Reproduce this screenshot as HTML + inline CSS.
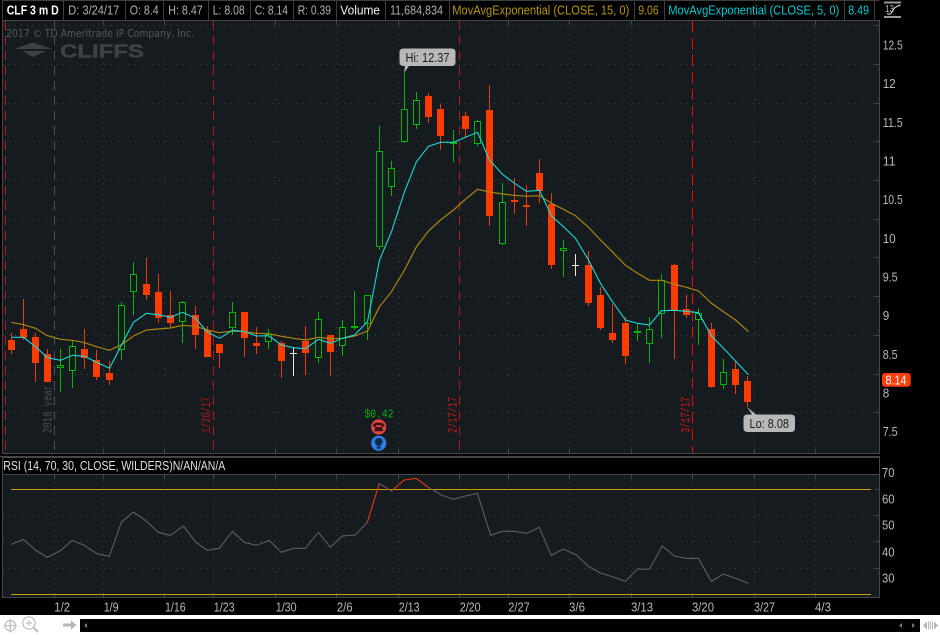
<!DOCTYPE html>
<html><head><meta charset="utf-8"><title>CLF 3 m D</title>
<style>
html,body{margin:0;padding:0;background:#000;width:940px;height:635px;overflow:hidden}
svg{display:block;font-family:"Liberation Sans",sans-serif}
.g{fill:#b0b0b0;font-size:12.5px}
.a{fill:#b8b8b8;font-size:12.6px}
</style></head><body>
<svg width="940" height="635" viewBox="0 0 940 635" xmlns="http://www.w3.org/2000/svg">
<rect width="940" height="635" fill="#000"/>
<rect x="2.5" y="20.5" width="877" height="433" fill="#161b20"/>
<rect x="2.5" y="474.5" width="877" height="123" fill="#161b20"/>

<!-- header separators -->
<path d="M2.5 .5H879.5M2.5 .5V20M63.5 1V20M125.5 1V20M163.5 1V20M208.5 1V20M250.5 1V20M293.5 1V20M336.5 1V20M385.5 1V20M449.5 1V20M634.5 1V20M664.5 1V20M844.5 1V20M874.5 1V20" stroke="#3c3f42" fill="none"/>
<!-- frames -->
<path d="M2.5 20.5H879.5V453.5H2.5ZM0 456.5H880M2.5 457.5H879.5V597.5H2.5ZM2.5 474.5H879.5" stroke="#44474a" fill="none"/>

<!-- grid main -->
<g stroke="#3d4145" stroke-dasharray="1 5" fill="none">
<path d="M3 25.5H879M3 64.5H879M3 103.5H879M3 141.5H879M3 180.5H879M3 219.5H879M3 257.5H879M3 296.5H879M3 335.5H879M3 374.5H879M3 412.5H879"/>
<path d="M103.5 21V453M164.5 21V453M275.5 21V453M336.5 21V453M398.5 21V453M508.5 21V453M569.5 21V453M631.5 21V453M754.5 21V453M815.5 21V453"/>
<path d="M3 515.5H879M3 541.5H879M3 568.5H879"/>
<path d="M54.5 475V597M103.5 475V597M164.5 475V597M213.5 475V597M275.5 475V597M336.5 475V597M398.5 475V597M459.5 475V597M508.5 475V597M569.5 475V597M631.5 475V597M692.5 475V597M754.5 475V597M815.5 475V597"/>
</g>
<!-- ticks -->
<path d="M54.5 21V25M103.5 21V25M164.5 21V25M213.5 21V25M275.5 21V25M336.5 21V25M398.5 21V25M459.5 21V25M508.5 21V25M569.5 21V25M631.5 21V25M692.5 21V25M754.5 21V25M815.5 21V25M103.5 449V453M164.5 449V453M275.5 449V453M336.5 449V453M398.5 449V453M508.5 449V453M569.5 449V453M631.5 449V453M754.5 449V453M815.5 449V453M54.5 475V479M103.5 475V479M164.5 475V479M213.5 475V479M275.5 475V479M336.5 475V479M398.5 475V479M459.5 475V479M508.5 475V479M569.5 475V479M631.5 475V479M692.5 475V479M754.5 475V479M815.5 475V479M54.5 593V597M103.5 593V597M164.5 593V597M213.5 593V597M275.5 593V597M336.5 593V597M398.5 593V597M459.5 593V597M508.5 593V597M569.5 593V597M631.5 593V597M692.5 593V597M754.5 593V597M815.5 593V597M875 25.5H879M875 64.5H879M875 103.5H879M875 141.5H879M875 180.5H879M875 219.5H879M875 257.5H879M875 296.5H879M875 335.5H879M875 374.5H879M875 412.5H879M875 489.5H879M875 515.5H879M875 541.5H879M875 568.5H879" stroke="#44474a" fill="none"/>

<!-- vertical markers -->
<path d="M54.5 21V453" stroke="#4c5054" stroke-dasharray="9 6" fill="none"/>
<path d="M5.5 21V453M213.5 21V453M459.5 21V453" stroke="#b41818" stroke-dasharray="9 6" fill="none"/>
<path d="M692.5 21V453" stroke="#f00808" stroke-dasharray="11 6" fill="none"/>

<!-- watermark -->
<text x="6" y="37" style="font-family:'DejaVu Sans',sans-serif;font-size:10.5px" fill="#53575c" textLength="188" lengthAdjust="spacingAndGlyphs">2017 © TD Ameritrade IP Company, Inc.</text>
<path d="M14 49L33 42.5L52 49ZM22 51H46L33 57Z" fill="#3c4045"/>
<text x="60" y="57.7" font-size="18" font-weight="bold" fill="#3e4247" stroke="#3e4247" stroke-width=".4" textLength="84" lengthAdjust="spacingAndGlyphs">CLIFFS</text>

<!-- rotated labels -->
<g style="font-family:'Liberation Mono',monospace;font-size:13px">
<text transform="translate(51.5,433) rotate(-90)" fill="#4a4e52" textLength="48" lengthAdjust="spacingAndGlyphs">2016 year</text>
<text transform="translate(210,433) rotate(-90)" fill="#b41818" textLength="36" lengthAdjust="spacingAndGlyphs">1/20/17</text>
<text transform="translate(456.5,433) rotate(-90)" fill="#c41818" textLength="36" lengthAdjust="spacingAndGlyphs">2/17/17</text>
<text transform="translate(689.5,433) rotate(-90)" fill="#d41414" textLength="36" lengthAdjust="spacingAndGlyphs">3/17/17</text>
</g>

<!-- wicks -->
<path fill="none" stroke="#ee3a0a" d="M11.5 333V354M23.5 299V340M35.5 333V382M47.5 349V382M84.5 329V369M96.5 350V380M109.5 361V385M146.5 258V300M158.5 274V323M170.5 291V328M195.5 306V349M207.5 326V357M219.5 344V368M244.5 312V357M256.5 327V354M281.5 341V378M305.5 326V375M330.5 335V376M428.5 93V123M440.5 104V150M465.5 112V138M489.5 85V226M514.5 178V214M526.5 185V226M539.5 159V203M551.5 193V269M588.5 251V306M600.5 287V330M612.5 304V343M625.5 317V364M674.5 264V359M686.5 295V318M711.5 323V388M735.5 361V394M747.5 376V407"/>
<path fill="none" stroke="#00b400" d="M60.5 349V392M72.5 341V388M121.5 302V360M133.5 262V315M182.5 301V343M232.5 302V335M268.5 329V349M318.5 312V363M342.5 320V356M354.5 291V330M367.5 295V340M379.5 126V250M391.5 161V196M404.5 73V143M416.5 92V129M453.5 130V162M477.5 120V146M502.5 183V245M563.5 240V277M637.5 323V341M649.5 317V363M661.5 274V338M698.5 308V345M723.5 359V389"/>
<path fill="none" stroke="#e6e6e6" d="M293.5 348V376M290 353.5H297M575.5 254V276M572 265.5H579"/>
<!-- red bodies -->
<g fill="#ff3c00">
<rect x="8" y="340" width="7" height="10"/><rect x="20" y="329" width="7" height="9"/><rect x="32" y="337" width="7" height="26"/><rect x="44" y="354" width="7" height="28"/><rect x="81" y="349" width="7" height="9"/><rect x="93" y="360" width="7" height="17"/><rect x="106" y="373" width="7" height="7"/><rect x="143" y="284" width="7" height="11"/><rect x="155" y="292" width="7" height="26"/><rect x="167" y="315" width="7" height="8"/><rect x="192" y="315" width="7" height="20"/><rect x="204" y="330" width="7" height="27"/><rect x="216" y="344" width="7" height="9"/><rect x="241" y="312" width="7" height="26"/><rect x="253" y="343" width="7" height="3"/><rect x="278" y="343" width="7" height="18"/><rect x="302" y="341" width="7" height="12"/><rect x="327" y="335" width="7" height="17"/><rect x="425" y="96" width="7" height="21"/><rect x="437" y="109" width="7" height="27"/><rect x="462" y="116" width="7" height="13"/><rect x="486" y="110" width="7" height="106"/><rect x="511" y="200" width="7" height="2"/><rect x="523" y="205" width="7" height="2"/><rect x="536" y="173" width="7" height="18"/><rect x="548" y="204" width="7" height="61"/><rect x="585" y="265" width="7" height="38"/><rect x="597" y="295" width="7" height="33"/><rect x="609" y="333" width="7" height="7"/><rect x="622" y="323" width="7" height="33"/><rect x="671" y="265" width="7" height="45"/><rect x="683" y="309" width="7" height="6"/><rect x="708" y="329" width="7" height="58"/><rect x="732" y="369" width="7" height="16"/><rect x="744" y="381" width="7" height="21"/>
</g>
<!-- green bodies -->
<g fill="#161b20" stroke="#00b400">
<rect x="57.5" y="365.5" width="6" height="2"/><rect x="69.5" y="346.5" width="6" height="24"/><rect x="118.5" y="305.5" width="6" height="44"/><rect x="130.5" y="274.5" width="6" height="17"/><rect x="179.5" y="302.5" width="6" height="19"/><rect x="229.5" y="312.5" width="6" height="15"/><rect x="265.5" y="334.5" width="6" height="7"/><rect x="315.5" y="319.5" width="6" height="38"/><rect x="339.5" y="327.5" width="6" height="18"/><rect x="351.5" y="326.5" width="6" height="1"/><rect x="364.5" y="295.5" width="6" height="28"/><rect x="376.5" y="151.5" width="6" height="95"/><rect x="388.5" y="168.5" width="6" height="18"/><rect x="401.5" y="109.5" width="6" height="32"/><rect x="413.5" y="100.5" width="6" height="24"/><rect x="450.5" y="142.5" width="6" height="1"/><rect x="474.5" y="121.5" width="6" height="22"/><rect x="499.5" y="202.5" width="6" height="41"/><rect x="560.5" y="248.5" width="6" height="2"/><rect x="634.5" y="331.5" width="6" height="1"/><rect x="646.5" y="329.5" width="6" height="14"/><rect x="658.5" y="280.5" width="6" height="33"/><rect x="695.5" y="313.5" width="6" height="6"/><rect x="720.5" y="372.5" width="6" height="12"/>
</g>

<!-- EMA 15 -->
<polyline fill="none" stroke="#a8860c" stroke-width="1.2" points="11.5,322.3 23.5,324.7 35.5,328.3 47.5,335.7 60.5,339.3 72.5,340.3 84.5,342.7 96.5,346.7 109.5,350.3 121.5,344.7 133.5,336 146.5,330 158.5,329 170.5,328 182.5,325.3 195.5,326.3 207.5,330 219.5,332.7 232.5,331 244.5,331.7 256.5,333.3 268.5,333.7 281.5,336.3 293.5,338.3 305.5,340 318.5,337.3 330.5,338.7 342.5,338.3 354.5,336 367.5,331 379.5,306.7 391.5,291.7 404.5,270 416.5,246.7 428.5,231 440.5,220 453.5,210 465.5,199.3 477.5,189.3 489.5,192 502.5,194 514.5,195.3 526.5,196.3 539.5,195.7 551.5,203.3 563.5,209.3 575.5,215.7 588.5,227.3 600.5,240 612.5,252 625.5,265.3 637.5,273.3 649.5,280.3 661.5,280.3 674.5,284.3 686.5,287.3 698.5,291 711.5,303.3 723.5,311.7 735.5,320 748.5,331.7"/>
<!-- EMA 5 -->
<polyline fill="none" stroke="#1fd6d6" stroke-width="1.1" points="11.5,337.3 23.5,337.3 35.5,346.7 47.5,357.7 60.5,360.3 72.5,355.3 84.5,356.3 96.5,362.3 109.5,368.3 121.5,345 133.5,322.3 146.5,313.3 158.5,314.7 170.5,317.3 182.5,312.3 195.5,318.3 207.5,332 219.5,338.3 232.5,330.3 244.5,331.5 256.5,336 268.5,335.7 281.5,345 293.5,347.7 305.5,348.7 318.5,339.3 330.5,343.3 342.5,338.3 354.5,335 367.5,321.7 379.5,260 391.5,231.7 404.5,191.7 416.5,161.7 428.5,146.3 440.5,142.3 453.5,142.3 465.5,137.3 477.5,132.3 489.5,160 502.5,174.3 514.5,183.3 526.5,191.3 539.5,190.3 551.5,216 563.5,226.7 575.5,238.3 588.5,260 600.5,283.3 612.5,301.7 625.5,320 637.5,323.3 649.5,325 661.5,310.7 674.5,310.3 686.5,311.3 698.5,312.7 711.5,336 723.5,348.3 735.5,361 748.5,374.7"/>

<!-- Balloons -->
<path d="M403.5 48.5H451.5Q455.5 48.5 455.5 52.5V62Q455.5 66 451.5 66H409L404 73L405 66H403.5Q399.5 66 399.5 62V52.5Q399.5 48.5 403.5 48.5Z" fill="#b8b8b8"/>
<text x="405.5" y="62" font-size="12.5" fill="#1c1c1c" textLength="44" lengthAdjust="spacingAndGlyphs">Hi: 12.37</text>
<path d="M747.5 414.5H752L747 407L756 414.5H791Q795 414.5 795 418.5V428Q795 432 791 432H747.5Q743.5 432 743.5 428V418.5Q743.5 414.5 747.5 414.5Z" fill="#b8b8b8"/>
<text x="749.5" y="428" font-size="12.5" fill="#1c1c1c" textLength="39.5" lengthAdjust="spacingAndGlyphs">Lo: 8.08</text>

<!-- dividend + icons -->
<text x="364.5" y="417.5" style="font-family:'Liberation Mono',monospace;font-size:12px" fill="#00b400" textLength="29" lengthAdjust="spacingAndGlyphs">$0.42</text>
<circle cx="378.7" cy="427" r="7.6" fill="#e24444"/>
<path d="M373 425.5Q373 422.6 378.7 422.6Q384.4 422.6 384.4 425.5V426.8H381.7L381.2 425.2H376.2L375.7 426.8H373ZM375.3 427H382.1L383.2 431.3H374.2Z" fill="#3a1414"/>
<circle cx="378.7" cy="443.3" r="7.6" fill="#2c7fe6"/>
<path d="M378.7 438A3.6 3.6 0 0 1 380.7 444.7V446H376.7V444.7A3.6 3.6 0 0 1 378.7 438ZM376.7 446.8H380.7V448.6H376.7Z" fill="#0e2a4e"/>

<!-- Header text -->
<text x="6.7" y="14.5" font-size="12.5" font-weight="bold" fill="#fff" textLength="52" lengthAdjust="spacingAndGlyphs">CLF 3 m D</text>
<text class="g" x="68.3" y="14.5" textLength="51" lengthAdjust="spacingAndGlyphs">D: 3/24/17</text>
<text class="g" x="129.7" y="14.5" textLength="29" lengthAdjust="spacingAndGlyphs">O: 8.4</text>
<text class="g" x="168.3" y="14.5" textLength="34.4" lengthAdjust="spacingAndGlyphs">H: 8.47</text>
<text class="g" x="212.7" y="14.5" textLength="32" lengthAdjust="spacingAndGlyphs">L: 8.08</text>
<text class="g" x="254.7" y="14.5" textLength="33.3" lengthAdjust="spacingAndGlyphs">C: 8.14</text>
<text class="g" x="297.7" y="14.5" textLength="33.3" lengthAdjust="spacingAndGlyphs">R: 0.39</text>
<text x="340.3" y="14.5" font-size="12.5" fill="#f0f0f0" textLength="39.7" lengthAdjust="spacingAndGlyphs">Volume</text>
<text class="g" x="390" y="14.5" textLength="53" lengthAdjust="spacingAndGlyphs">11,684,834</text>
<text x="452.3" y="14.5" font-size="12.5" fill="#b8950a" textLength="177" lengthAdjust="spacingAndGlyphs">MovAvgExponential (CLOSE, 15, 0)</text>
<text x="638.3" y="14.5" font-size="12.5" fill="#b8950a" textLength="20.4" lengthAdjust="spacingAndGlyphs">9.06</text>
<text x="668.3" y="14.5" font-size="12.5" fill="#00c8ce" textLength="171" lengthAdjust="spacingAndGlyphs">MovAvgExponential (CLOSE, 5, 0)</text>
<text x="848.3" y="14.5" font-size="12.5" fill="#00c8ce" textLength="20.7" lengthAdjust="spacingAndGlyphs">8.49</text>
<!-- top-right icon -->
<path d="M884 2.5H901M884 17H901" stroke="#9a9a9a" stroke-width="2" fill="none"/>
<text x="885" y="12" font-size="10.5" fill="#bbb" textLength="9" lengthAdjust="spacingAndGlyphs">13</text>
<path d="M887 13.5Q890.5 15.5 892.5 11Q894.5 6.5 900.5 5" stroke="#c4c4c4" stroke-width="1.2" fill="none"/>

<!-- Right axis -->
<text class="a" x="882.7" y="49.4" textLength="20" lengthAdjust="spacingAndGlyphs">12.5</text>
<text class="a" x="882.7" y="88" textLength="13" lengthAdjust="spacingAndGlyphs">12</text>
<text class="a" x="882.7" y="127" textLength="20" lengthAdjust="spacingAndGlyphs">11.5</text>
<text class="a" x="882.7" y="165.5" textLength="13" lengthAdjust="spacingAndGlyphs">11</text>
<text class="a" x="882.7" y="204" textLength="20" lengthAdjust="spacingAndGlyphs">10.5</text>
<text class="a" x="882.7" y="243" textLength="13" lengthAdjust="spacingAndGlyphs">10</text>
<text class="a" x="882.7" y="281.5" textLength="15" lengthAdjust="spacingAndGlyphs">9.5</text>
<text class="a" x="882.7" y="320" textLength="6.5" lengthAdjust="spacingAndGlyphs">9</text>
<text class="a" x="882.7" y="359" textLength="15" lengthAdjust="spacingAndGlyphs">8.5</text>
<text class="a" x="882.7" y="397.5" textLength="6.5" lengthAdjust="spacingAndGlyphs">8</text>
<text class="a" x="882.7" y="436" textLength="15" lengthAdjust="spacingAndGlyphs">7.5</text>
<rect x="882" y="373" width="28.7" height="13.7" rx="3" fill="#ff3c0a"/>
<text x="885.5" y="384.3" font-size="12.5" fill="#fff" textLength="21" lengthAdjust="spacingAndGlyphs">8.14</text>

<!-- RSI -->
<text x="3.3" y="470" font-size="12.5" fill="#e0e0e0" textLength="222" lengthAdjust="spacingAndGlyphs">RSI (14, 70, 30, CLOSE, WILDERS)N/AN/AN/A</text>
<path d="M11 489.5H871M11 594.5H871" stroke="#d09f00" fill="none"/>
<g transform="translate(0,455) scale(.33333)" fill="none" stroke-width="3.3">
<polyline stroke="#5c5f62" points="34,268 70,253 106,285 142,307 181,287 217,256 253,271 292,297 328,304 364,202 400,171 439,198 475,232 511,241 550,213 586,260 622,286 658,280 697,229 733,262 769,271 808,256 844,292 880,280 916,280 955,232 991,277 1027,243 1066,240 1102,202"/>
<polyline stroke="#e63a0a" points="1102,202 1138,85"/>
<polyline stroke="#5c5f62" points="1138,85 1174,108"/>
<polyline stroke="#e63a0a" points="1174,108 1213,75 1249,70 1285,97"/>
<polyline stroke="#5c5f62" points="1285,97 1324,120 1360,133 1396,123 1432,115 1472,241 1507,229 1543,229 1579,235 1618,217 1654,301 1690,282 1729,300 1765,334 1801,354 1840,366 1876,379 1912,342 1948,343 1987,273 2023,303 2059,310 2095,310 2134,379 2170,357 2209,371 2245,385"/>
</g>
<text class="a" x="882" y="477" textLength="12.5" lengthAdjust="spacingAndGlyphs">70</text>
<text class="a" x="882" y="503.3" textLength="12.5" lengthAdjust="spacingAndGlyphs">60</text>
<text class="a" x="882" y="529.7" textLength="12.5" lengthAdjust="spacingAndGlyphs">50</text>
<text class="a" x="882" y="556.3" textLength="12.5" lengthAdjust="spacingAndGlyphs">40</text>
<text class="a" x="882" y="582.3" textLength="12.5" lengthAdjust="spacingAndGlyphs">30</text>

<!-- X axis -->
<text class="a" x="54.3" y="611.5" textLength="15.7" lengthAdjust="spacingAndGlyphs">1/2</text>
<text class="a" x="103.7" y="611.5" textLength="15" lengthAdjust="spacingAndGlyphs">1/9</text>
<text class="a" x="165" y="611.5" textLength="20.7" lengthAdjust="spacingAndGlyphs">1/16</text>
<text class="a" x="213.7" y="611.5" textLength="21" lengthAdjust="spacingAndGlyphs">1/23</text>
<text class="a" x="275.7" y="611.5" textLength="21" lengthAdjust="spacingAndGlyphs">1/30</text>
<text class="a" x="336.7" y="611.5" textLength="16" lengthAdjust="spacingAndGlyphs">2/6</text>
<text class="a" x="398.7" y="611.5" textLength="21" lengthAdjust="spacingAndGlyphs">2/13</text>
<text class="a" x="459.7" y="611.5" textLength="21" lengthAdjust="spacingAndGlyphs">2/20</text>
<text class="a" x="508.3" y="611.5" textLength="21.4" lengthAdjust="spacingAndGlyphs">2/27</text>
<text class="a" x="569" y="611.5" textLength="16" lengthAdjust="spacingAndGlyphs">3/6</text>
<text class="a" x="631" y="611.5" textLength="22" lengthAdjust="spacingAndGlyphs">3/13</text>
<text class="a" x="692" y="611.5" textLength="22" lengthAdjust="spacingAndGlyphs">3/20</text>
<text class="a" x="754" y="611.5" textLength="21" lengthAdjust="spacingAndGlyphs">3/27</text>
<text class="a" x="815" y="611.5" textLength="16" lengthAdjust="spacingAndGlyphs">4/3</text>

<!-- Bottom bar -->
<rect x="0" y="615" width="940" height="20" fill="#fff"/>
<rect x="80" y="619" width="840" height="13" fill="#000"/>
<g fill="none" stroke="#bdbdbd" stroke-width="1.2">
<circle cx="10.3" cy="625.7" r="5.2"/><path d="M10.3 619V632.5M3.8 625.7H17"/>
<circle cx="29" cy="623" r="6.2"/><path d="M33.5 627.5L38 632" stroke-width="2"/><path d="M26 623H32M29 620V626"/>
</g>
<path d="M63 623.5H71V620.5L76.5 625L71 629.5V626.5H63Z" fill="#b4b4b4"/>
<path d="M84 625.5L87 623V628Z" fill="#777"/><path d="M899 625.5L902 623V628Z" fill="#777"/><path d="M915 625.5L912 623V628Z" fill="#777"/>
<path d="M923 625.5L927 621.5V629.5ZM938 625.5L934 621.5V629.5Z" fill="#b4b4b4"/><path d="M928.5 621.5V629.5M930.5 621.5V629.5M932.5 621.5V629.5" stroke="#b4b4b4" fill="none"/>
</svg>
</body></html>
